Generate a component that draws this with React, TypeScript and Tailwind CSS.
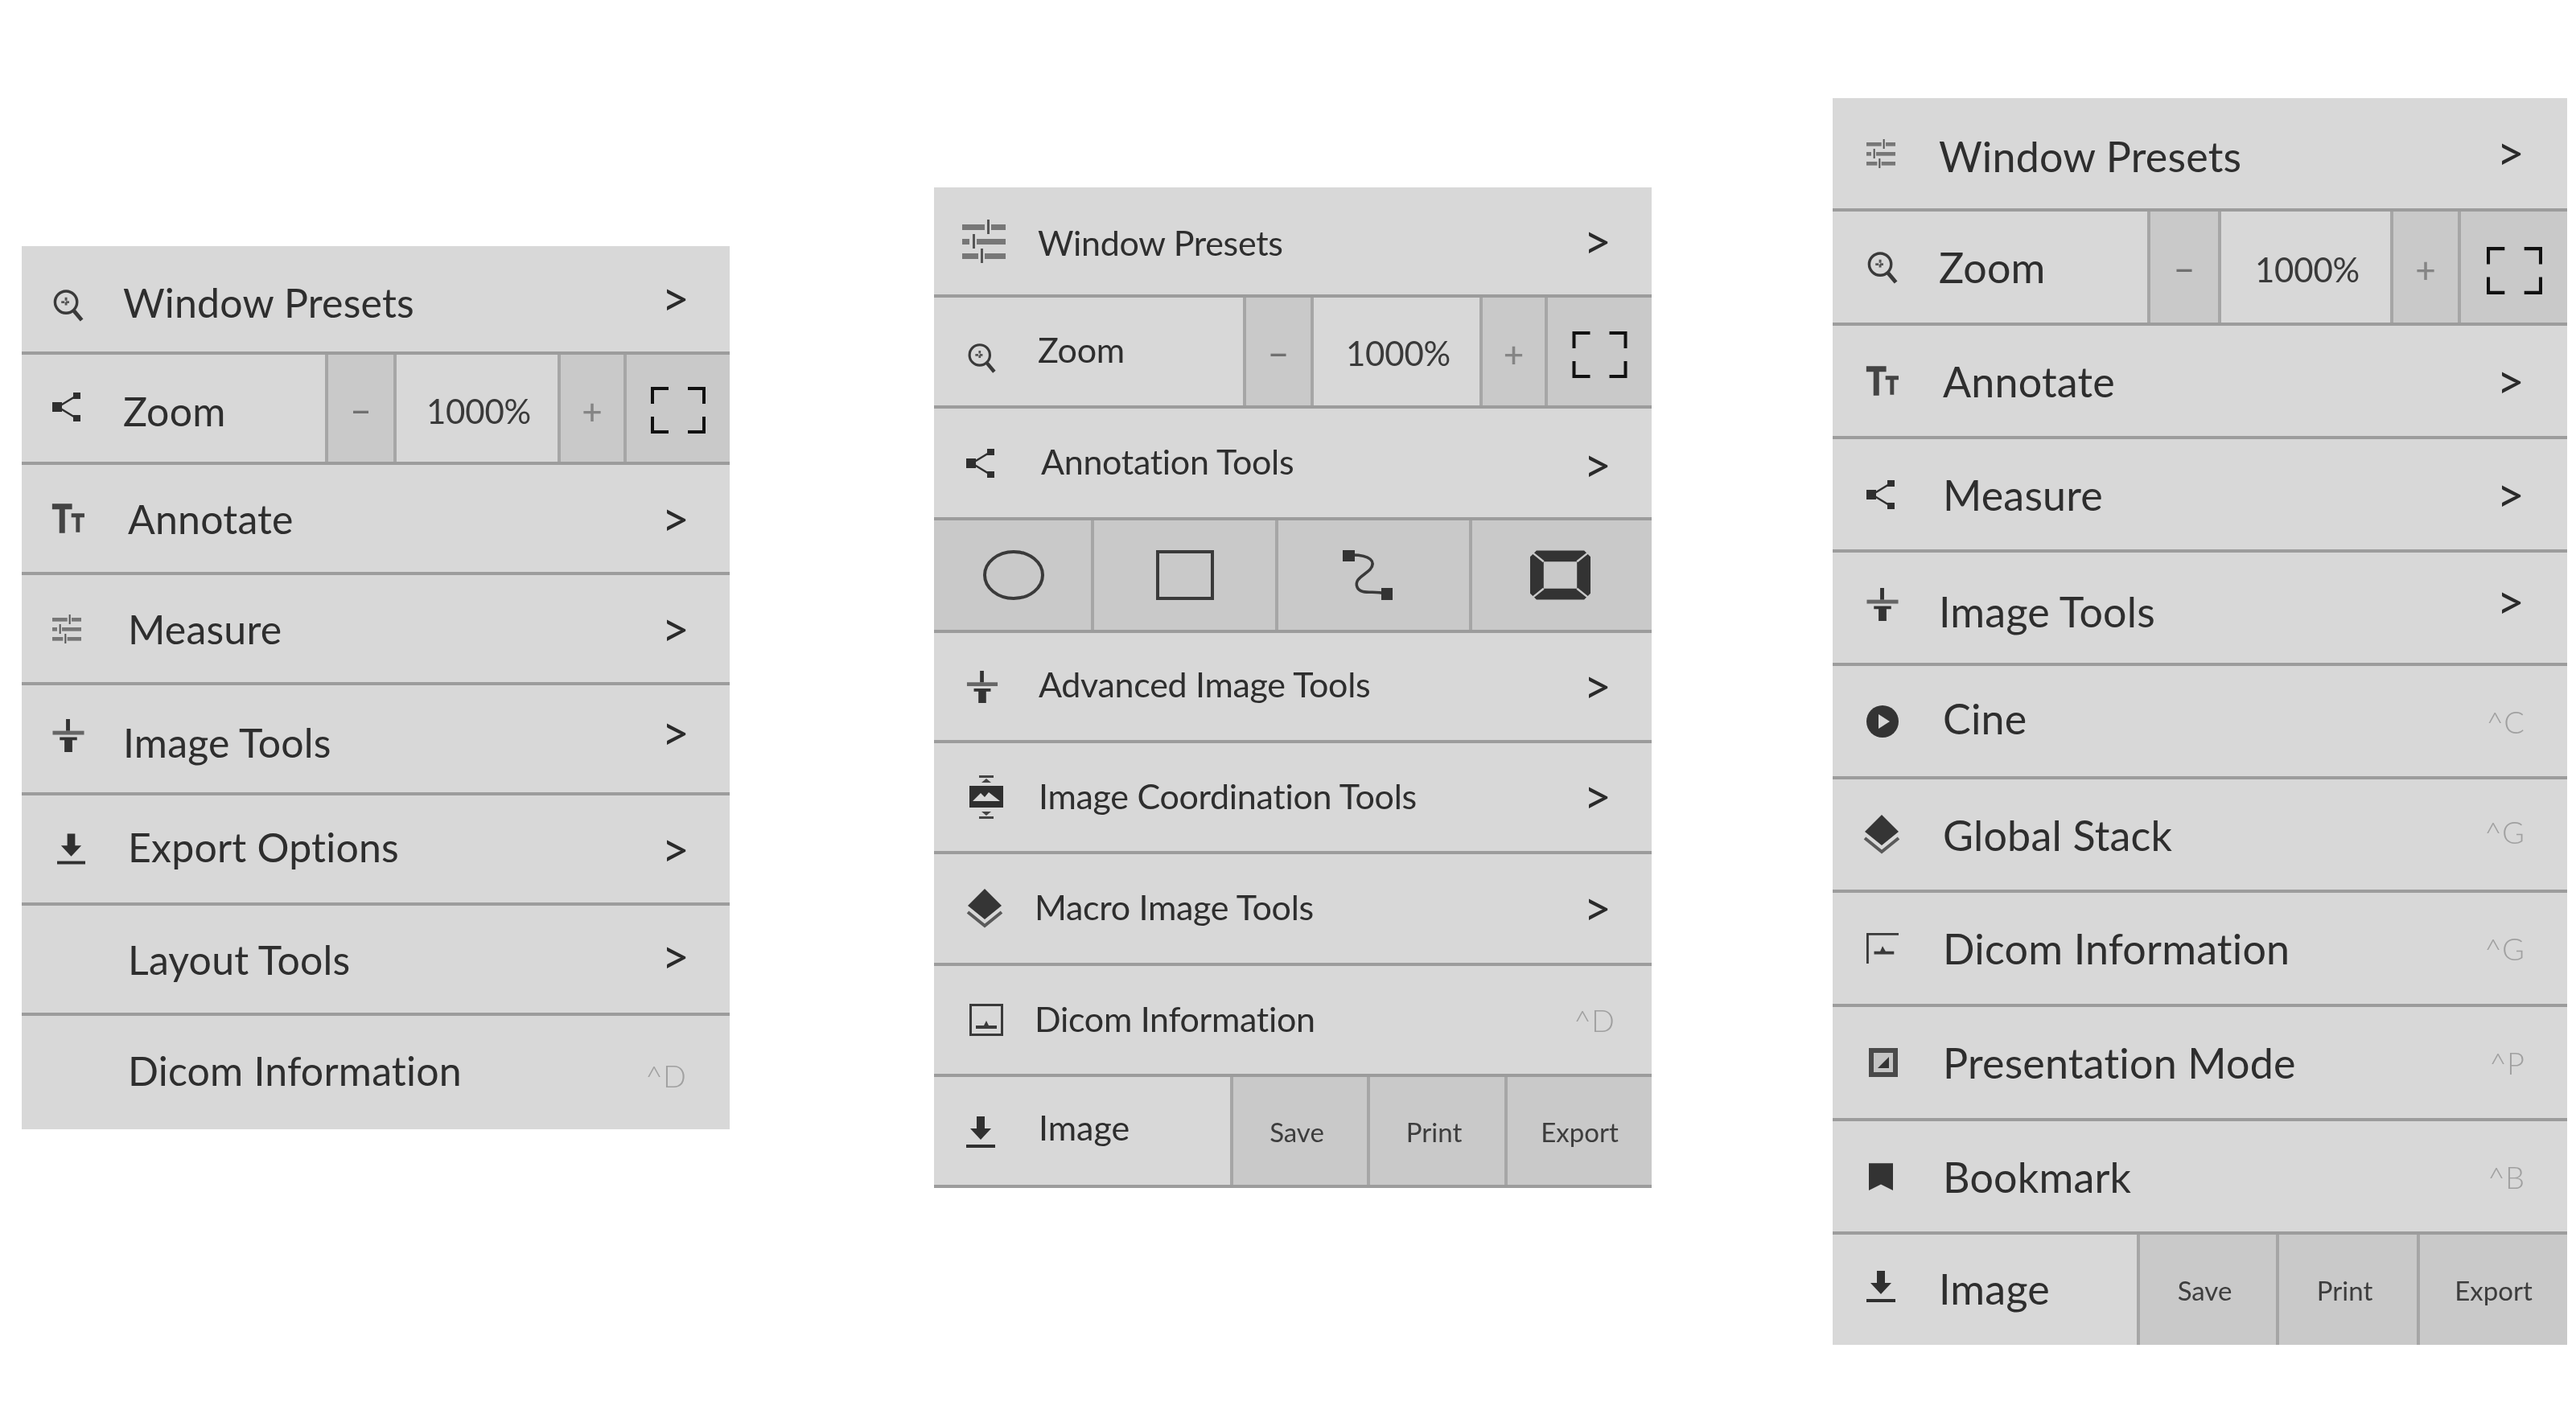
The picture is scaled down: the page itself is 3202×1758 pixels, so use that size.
import type { ReactNode } from "react";

type IconProps = { className?: string };

function ZoomIcon({ className }: IconProps) {
  return (
    <svg viewBox="0 0 40 42" className={className} fill="none" stroke="#3a3a3a">
      <circle cx="17" cy="17" r="14" strokeWidth="3.5" />
      <path d="M27 28 L37 40" strokeWidth="5" />
      <path d="M11 17 h12 M17 11 v12" strokeWidth="3" stroke="#555" strokeDasharray="4 2" />
    </svg>
  );
}

function ShareIcon({ className }: IconProps) {
  return (
    <svg viewBox="0 0 36 36" className={className} fill="#2f2f2f" stroke="#2f2f2f">
      <path d="M7 18 L30 4 M7 18 L30 32" strokeWidth="2.5" fill="none" />
      <rect x="0" y="12" width="12" height="12" stroke="none" />
      <rect x="26" y="0" width="9" height="8" stroke="none" />
      <rect x="26" y="28" width="9" height="8" stroke="none" />
    </svg>
  );
}

function SlidersIcon({ className }: IconProps) {
  return (
    <svg viewBox="0 0 54 54" className={className} fill="#777">
      <rect x="0" y="6" width="28" height="7" />
      <rect x="36" y="6" width="18" height="7" />
      <rect x="31" y="0" width="3" height="18" fill="#555" />
      <rect x="0" y="24" width="9" height="7" />
      <rect x="18" y="24" width="36" height="7" />
      <rect x="13" y="18" width="3" height="18" fill="#555" />
      <rect x="0" y="42" width="20" height="7" />
      <rect x="28" y="42" width="26" height="7" />
      <rect x="23" y="36" width="3" height="18" fill="#555" />
    </svg>
  );
}

function ImageToolsIcon({ className }: IconProps) {
  return (
    <svg viewBox="0 0 40 42" className={className} fill="#333">
      <rect x="0" y="15" width="40" height="5" fill="#666" />
      <rect x="17" y="0" width="5" height="15" />
      <path d="M9 23 h22 v4 h-6 v15 h-10 v-15 h-6 z" />
    </svg>
  );
}

function DownloadIcon({ className }: IconProps) {
  return (
    <svg viewBox="0 0 36 40" className={className} fill="#303030">
      <path d="M13 0 h10 v15 h8 L18 29 L5 15 h8 z" />
      <rect x="0" y="35" width="36" height="4" />
    </svg>
  );
}

function CineIcon({ className }: IconProps) {
  return (
    <svg viewBox="0 0 40 40" className={className}>
      <circle cx="20" cy="20" r="20" fill="#343434" />
      <path d="M15 11 L29 20 L15 29 z" fill="#d8d8d8" />
    </svg>
  );
}

function StackIcon({ className }: IconProps) {
  return (
    <svg viewBox="0 0 46 50" className={className}>
      <path d="M23 0 L44 21 L23 38 L2 21 z" fill="#353535" />
      <path d="M2 29 L23 46 L44 29" fill="none" stroke="#5a5a5a" strokeWidth="4" />
    </svg>
  );
}

function CoordinationIcon({ className }: IconProps) {
  return (
    <svg viewBox="0 0 42 54" className={className}>
      <rect x="12" y="0" width="18" height="3" fill="#444" />
      <path d="M21 4 L27 9 H15 z" fill="#444" />
      <rect x="0" y="13" width="42" height="27" fill="#2f2f2f" />
      <path d="M4 32 L14 22 L19 27 L24 21 L38 32 z" fill="#d8d8d8" />
      <path d="M21 50 L27 45 H15 z" fill="#444" />
      <rect x="12" y="51" width="18" height="3" fill="#444" />
    </svg>
  );
}

function FramedImageIcon({ className }: IconProps) {
  return (
    <svg viewBox="0 0 42 40" className={className}>
      <rect x="1.5" y="1.5" width="39" height="37" fill="none" stroke="#3a3a3a" strokeWidth="3" />
      <path d="M8 31 L8 27 L18 27 L21 21 L24 27 L34 27 L34 31 z" fill="#3a3a3a" />
    </svg>
  );
}

function OpenFrameIcon({ className }: IconProps) {
  return (
    <svg viewBox="0 0 42 40" className={className}>
      <path d="M1.5 40 V1.5 H42" fill="none" stroke="#3a3a3a" strokeWidth="3" />
      <path d="M10 28 L10 24 L18 24 L21 17 L25 24 L36 24 L36 28 z" fill="#3a3a3a" />
    </svg>
  );
}

function PresentationIcon({ className }: IconProps) {
  return (
    <svg viewBox="0 0 36 36" className={className}>
      <rect x="0" y="0" width="36" height="36" fill="#4a4a4a" />
      <rect x="6" y="6" width="24" height="24" fill="#c4c4c4" />
      <path d="M11 25 L25 11 V25 z" fill="#333" />
    </svg>
  );
}

function BookmarkIcon({ className }: IconProps) {
  return (
    <svg viewBox="0 0 32 36" className={className}>
      <path d="M0 0 H32 V36 L16 28 L0 36 z" fill="#333" />
    </svg>
  );
}

function TextSizeIcon() {
  return (
    <span className="flex items-start font-['Liberation_Sans',sans-serif] font-bold text-[#444] leading-none [-webkit-text-stroke:1.5px_#444]">
      <span className="w-[24px] origin-left scale-x-80 text-[50px]">T</span>
      <span className="mt-[14px] origin-left scale-x-80 text-[32px]">T</span>
    </span>
  );
}

function FullscreenIcon({ className }: IconProps) {
  return (
    <svg viewBox="0 0 68 58" className={className} fill="none" stroke="#111" strokeWidth="4">
      <path d="M2 21 V2 H22 M46 2 H66 V21 M2 37 V56 H22 M46 56 H66 V37" />
    </svg>
  );
}

function EllipseIcon({ className }: IconProps) {
  return (
    <svg viewBox="0 0 76 62" className={className} fill="none" stroke="#3a3a3a" strokeWidth="4">
      <ellipse cx="38" cy="31" rx="36" ry="29" />
    </svg>
  );
}

function RectIcon({ className }: IconProps) {
  return (
    <svg viewBox="0 0 72 62" className={className} fill="none" stroke="#3a3a3a" strokeWidth="4">
      <rect x="2" y="2" width="68" height="58" />
    </svg>
  );
}

function SplineIcon({ className }: IconProps) {
  return (
    <svg viewBox="0 0 62 62" className={className} fill="#333">
      <path
        d="M12 6 C34 6 42 14 34 24 C26 32 14 36 18 46 C22 56 40 50 52 54"
        fill="none"
        stroke="#3a3a3a"
        strokeWidth="3.5"
      />
      <rect x="0" y="0" width="15" height="14" />
      <rect x="48" y="47" width="14" height="15" />
    </svg>
  );
}

function ThickRectIcon({ className }: IconProps) {
  return (
    <svg viewBox="0 0 76 62" className={className}>
      <path
        d="M8 0 H68 L76 8 V54 L68 62 H8 L0 54 V8 z M17 14 V48 H59 V14 z"
        fill="#333"
        fillRule="evenodd"
      />
      <path d="M2 2 L17 14 M74 2 L59 14 M2 60 L17 48 M74 60 L59 48" stroke="#c9c9c9" strokeWidth="2.5" />
    </svg>
  );
}

const divider = "border-b-4 border-[#9c9c9c]";
const cell = "flex h-full items-center justify-center border-l-4 border-[#a6a6a6] bg-[#c9c9c9]";

function Chevron({ className }: { className: string }) {
  return <span className={`font-['Lato',sans-serif] leading-none text-[#2a2a2a] text-[60px] ${className}`}>&gt;</span>;
}

function Shortcut({ children, className }: { children: ReactNode; className: string }) {
  return <span className={`font-['Lato',sans-serif] font-light leading-none text-[#a0a0a0] ${className}`}>{children}</span>;
}

function MenuRow(props: {
  rowClass: string;
  slotClass: string;
  icon?: ReactNode;
  label: string;
  labelClass: string;
  right?: ReactNode;
}) {
  return (
    <div className={`flex items-center bg-[#d8d8d8] ${props.rowClass}`}>
      <div className={`flex shrink-0 items-center ${props.slotClass}`}>{props.icon}</div>
      <span className={`leading-none text-[#2e2e2e] ${props.labelClass}`}>{props.label}</span>
      <div className="flex-1" />
      {props.right}
    </div>
  );
}

function ZoomRow(props: {
  rowClass: string;
  leftClass: string;
  slotClass: string;
  icon: ReactNode;
  labelClass: string;
  minusClass: string;
  valueClass: string;
  plusClass: string;
  fullClass: string;
  fullIconClass: string;
}) {
  return (
    <div className={`flex items-stretch bg-[#d8d8d8] ${props.rowClass}`}>
      <div className={`flex shrink-0 items-center ${props.leftClass}`}>
        <div className={`flex shrink-0 items-center ${props.slotClass}`}>{props.icon}</div>
        <span className={`leading-none text-[#2e2e2e] ${props.labelClass}`}>Zoom</span>
      </div>
      <div className={`${cell} text-[44px] font-medium text-[#707070] ${props.minusClass}`}>−</div>
      <div className={`flex h-full items-center justify-center border-l-4 border-[#a6a6a6] pl-[4px] text-[42px] tracking-[-0.2px] text-[#3a3a3a] ${props.valueClass}`}>
        1000%
      </div>
      <div className={`${cell} text-[44px] font-medium text-[#858585] ${props.plusClass}`}>+</div>
      <div className={`${cell} flex-1 ${props.fullClass}`}>
        <FullscreenIcon className={props.fullIconClass} />
      </div>
    </div>
  );
}

function PanelOne() {
  const row = `pl-[38px] pr-[50px] ${divider}`;
  const label = "text-[50px] tracking-[0.2px]";
  return (
    <div className="mt-[306px] ml-[27px] w-[880px] shrink-0 font-['Lato',sans-serif]">
      <MenuRow
        rowClass={`h-[135px] ${row}`}
        slotClass="w-[88px] mt-[16px]"
        icon={<ZoomIcon className="h-[41px] w-[40px]" />}
        label="Window Presets"
        labelClass={`${label} mt-[8px]`}
        right={<Chevron className="mb-[4px]" />}
      />
      <ZoomRow
        rowClass={`h-[137px] pl-[38px] ${divider}`}
        leftClass="w-[339px]"
        slotClass="w-[88px] mb-[4px]"
        icon={<ShareIcon className="h-[36px] w-[36px]" />}
        labelClass={`${label} mt-[6px]`}
        minusClass="w-[85px] pt-[4px]"
        valueClass="w-[204px] pt-[8px]"
        plusClass="w-[82px] pt-[6px]"
        fullClass="pt-[4px]"
        fullIconClass="h-[58px] w-[68px]"
      />
      <MenuRow
        rowClass={`h-[137px] ${row}`}
        slotClass="w-[94px]"
        icon={<TextSizeIcon />}
        label="Annotate"
        labelClass={label}
        right={<Chevron className="mb-[2px]" />}
      />
      <MenuRow
        rowClass={`h-[137px] ${row}`}
        slotClass="w-[94px]"
        icon={<SlidersIcon className="h-[36px] w-[36px]" />}
        label="Measure"
        labelClass={label}
        right={<Chevron className="mb-[2px]" />}
      />
      <MenuRow
        rowClass={`h-[137px] ${row}`}
        slotClass="w-[88px] mb-[8px]"
        icon={<ImageToolsIcon className="h-[41px] w-[40px]" />}
        label="Image Tools"
        labelClass={`${label} mt-[8px]`}
        right={<Chevron className="mb-[18px]" />}
      />
      <MenuRow
        rowClass={`h-[137px] ${row}`}
        slotClass="w-[94px]"
        icon={<DownloadIcon className="ml-[6px] h-[40px] w-[35px]" />}
        label="Export Options"
        labelClass={`${label} mb-[6px]`}
        right={<Chevron className="mb-[2px]" />}
      />
      <MenuRow
        rowClass={`h-[137px] ${row}`}
        slotClass="w-[94px]"
        label="Layout Tools"
        labelClass={label}
        right={<Chevron className="mb-[10px]" />}
      />
      <MenuRow
        rowClass="h-[141px] pl-[38px] pr-[54px]"
        slotClass="w-[94px]"
        label="Dicom Information"
        labelClass={`${label} mb-[6px]`}
        right={<Shortcut className="mt-[6px] text-[38px]">^D</Shortcut>}
      />
    </div>
  );
}

function PanelTwo() {
  const row = `pl-[40px] pr-[50px] ${divider}`;
  const label = "text-[43px] tracking-[-0.3px]";
  return (
    <div className="mt-[233px] ml-[254px] w-[892px] shrink-0 font-['Lato',sans-serif]">
      <MenuRow
        rowClass={`h-[137px] ${row}`}
        slotClass="w-[89px]"
        icon={<SlidersIcon className="-ml-[5px] h-[54px] w-[54px]" />}
        label="Window Presets"
        labelClass={`${label} mt-[4px]`}
        right={<Chevron className="mb-[2px]" />}
      />
      <ZoomRow
        rowClass={`h-[138px] pl-[40px] ${divider}`}
        leftClass="w-[344px]"
        slotClass="w-[89px] mt-[16px]"
        icon={<ZoomIcon className="h-[38px] w-[39px]" />}
        labelClass={`${label} mb-[6px]`}
        minusClass="w-[84px] pt-[4px]"
        valueClass="w-[210px] pt-[4px]"
        plusClass="w-[81px] pt-[6px]"
        fullClass="pt-[8px]"
        fullIconClass="h-[58px] w-[69px]"
      />
      <MenuRow
        rowClass={`h-[139px] ${row}`}
        slotClass="w-[93px]"
        icon={<ShareIcon className="h-[36px] w-[36px]" />}
        label="Annotation Tools"
        labelClass={`${label} mb-[4px]`}
        right={<Chevron className="mt-[2px]" />}
      />
      <div className={`flex h-[140px] items-stretch bg-[#c9c9c9] ${divider}`}>
        <div className="flex w-[195px] items-center justify-center">
          <EllipseIcon className="ml-[3px] h-[62px] w-[76px]" />
        </div>
        <div className="flex w-[229px] items-center justify-center border-l-4 border-[#a6a6a6]">
          <RectIcon className="h-[62px] w-[72px]" />
        </div>
        <div className="flex w-[241px] items-center justify-center border-l-4 border-[#a6a6a6]">
          <SplineIcon className="-ml-[16px] h-[62px] w-[62px]" />
        </div>
        <div className="flex flex-1 items-center justify-center border-l-4 border-[#a6a6a6]">
          <ThickRectIcon className="-ml-[5px] h-[62px] w-[75px]" />
        </div>
      </div>
      <MenuRow
        rowClass={`h-[137px] ${row}`}
        slotClass="w-[90px]"
        icon={<ImageToolsIcon className="h-[40px] w-[40px]" />}
        label="Advanced Image Tools"
        labelClass={`${label} mb-[6px]`}
        right={<Chevron className="mb-[4px]" />}
      />
      <MenuRow
        rowClass={`h-[138px] ${row}`}
        slotClass="w-[90px]"
        icon={<CoordinationIcon className="ml-[4px] h-[54px] w-[42px]" />}
        label="Image Coordination Tools"
        labelClass={`${label} mb-[4px]`}
        right={<Chevron className="mb-[4px]" />}
      />
      <MenuRow
        rowClass={`h-[139px] ${row}`}
        slotClass="w-[85px]"
        icon={<StackIcon className="h-[50px] w-[46px]" />}
        label="Macro Image Tools"
        labelClass={`${label} mb-[4px]`}
        right={<Chevron className="mb-[4px]" />}
      />
      <MenuRow
        rowClass={`h-[138px] pl-[40px] pr-[46px] ${divider}`}
        slotClass="w-[85px]"
        icon={<FramedImageIcon className="ml-[4px] h-[40px] w-[42px]" />}
        label="Dicom Information"
        labelClass={`${label} mb-[4px]`}
        right={<Shortcut className="text-[38px]">^D</Shortcut>}
      />
      <div className={`flex h-[138px] items-stretch bg-[#d8d8d8] ${divider}`}>
        <div className="flex w-[368px] items-center pl-[40px]">
          <div className="mt-[4px] flex w-[90px] shrink-0 items-center">
            <DownloadIcon className="h-[40px] w-[36px]" />
          </div>
          <span className="mb-[10px] text-[43px] leading-none text-[#2e2e2e]">Image</span>
        </div>
        <div className={`${cell} w-[170px] pt-[4px] pr-[8px] text-[33px] text-[#3d3d3d]`}>Save</div>
        <div className={`${cell} w-[171px] pt-[4px] pr-[8px] text-[33px] text-[#3d3d3d]`}>Print</div>
        <div className={`${cell} flex-1 pt-[4px] text-[33px] text-[#3d3d3d]`}>Export</div>
      </div>
    </div>
  );
}

function PanelThree() {
  const row = `pl-[42px] pr-[53px] ${divider}`;
  const short = `pl-[42px] pr-[53px] ${divider}`;
  const label = "text-[52px] tracking-[0.2px]";
  return (
    <div className="mt-[122px] ml-[225px] w-[913px] shrink-0 font-['Lato',sans-serif]">
      <MenuRow
        rowClass={`h-[141px] ${row}`}
        slotClass="w-[90px]"
        icon={<SlidersIcon className="h-[36px] w-[36px]" />}
        label="Window Presets"
        labelClass={`${label} mt-[6px]`}
        right={<Chevron className="mb-[4px]" />}
      />
      <ZoomRow
        rowClass={`h-[142px] pl-[42px] ${divider}`}
        leftClass="w-[349px]"
        slotClass="w-[90px]"
        icon={<ZoomIcon className="h-[41px] w-[40px]" />}
        labelClass={label}
        minusClass="w-[88px] pt-[4px]"
        valueClass="w-[214px] pt-[6px]"
        plusClass="w-[84px] pt-[6px]"
        fullClass="pt-[8px]"
        fullIconClass="h-[59px] w-[69px]"
      />
      <MenuRow
        rowClass={`h-[141px] ${row}`}
        slotClass="w-[95px]"
        icon={<TextSizeIcon />}
        label="Annotate"
        labelClass={label}
        right={<Chevron className="mb-[2px]" />}
      />
      <MenuRow
        rowClass={`h-[141px] ${row}`}
        slotClass="w-[95px]"
        icon={<ShareIcon className="h-[36px] w-[36px]" />}
        label="Measure"
        labelClass={label}
        right={<Chevron className="mb-[2px]" />}
      />
      <MenuRow
        rowClass={`h-[141px] ${row}`}
        slotClass="w-[90px] mb-[8px]"
        icon={<ImageToolsIcon className="h-[41px] w-[40px]" />}
        label="Image Tools"
        labelClass={`${label} mt-[8px]`}
        right={<Chevron className="mb-[18px]" />}
      />
      <MenuRow
        rowClass={`h-[141px] ${short}`}
        slotClass="w-[95px]"
        icon={<CineIcon className="h-[40px] w-[40px]" />}
        label="Cine"
        labelClass={`${label} mb-[8px]`}
        right={<Shortcut className="text-[38px]">^C</Shortcut>}
      />
      <MenuRow
        rowClass={`h-[141px] ${short}`}
        slotClass="w-[95px]"
        icon={<StackIcon className="-ml-[4px] h-[50px] w-[46px]" />}
        label="Global Stack"
        labelClass={label}
        right={<Shortcut className="mb-[8px] text-[38px]">^G</Shortcut>}
      />
      <MenuRow
        rowClass={`h-[142px] ${short}`}
        slotClass="w-[95px]"
        icon={<OpenFrameIcon className="h-[40px] w-[40px]" />}
        label="Dicom Information"
        labelClass={label}
        right={<Shortcut className="text-[38px]">^G</Shortcut>}
      />
      <MenuRow
        rowClass={`h-[142px] ${short}`}
        slotClass="w-[95px]"
        icon={<PresentationIcon className="ml-[3px] h-[36px] w-[36px]" />}
        label="Presentation Mode"
        labelClass={label}
        right={<Shortcut className="text-[38px]">^P</Shortcut>}
      />
      <MenuRow
        rowClass={`h-[141px] ${short}`}
        slotClass="w-[95px]"
        icon={<BookmarkIcon className="ml-[3px] h-[36px] w-[30px]" />}
        label="Bookmark"
        labelClass={label}
        right={<Shortcut className="text-[38px]">^B</Shortcut>}
      />
      <div className="flex h-[137px] items-stretch bg-[#d8d8d8]">
        <div className="flex w-[378px] items-center pl-[42px]">
          <div className="mb-[8px] flex w-[90px] shrink-0 items-center">
            <DownloadIcon className="h-[40px] w-[36px]" />
          </div>
          <span className="mb-[4px] text-[52px] leading-none tracking-[0.2px] text-[#2e2e2e]">Image</span>
        </div>
        <div className={`${cell} w-[173px] pt-[2px] pr-[8px] text-[33px] text-[#3d3d3d]`}>Save</div>
        <div className={`${cell} w-[175px] pt-[2px] pr-[8px] text-[33px] text-[#3d3d3d]`}>Print</div>
        <div className={`${cell} flex-1 pt-[2px] text-[33px] text-[#3d3d3d]`}>Export</div>
      </div>
    </div>
  );
}

export default function App() {
  return (
    <div className="flex h-[1758px] w-[3202px] items-start overflow-hidden bg-white font-['Lato',sans-serif] blur-[0.7px]">
      <PanelOne />
      <PanelTwo />
      <PanelThree />
    </div>
  );
}
